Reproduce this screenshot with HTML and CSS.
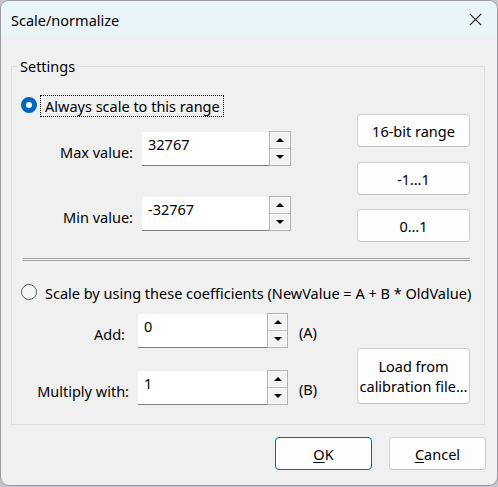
FILE: index.html
```html
<!DOCTYPE html>
<html>
<head>
<meta charset="utf-8">
<title>Scale/normalize</title>
<link rel="stylesheet" href="styles.css">
</head>
<body>
<div class="window">
  <div class="titlebar">
    <span class="title">Scale/normalize</span>
    <svg class="close" width="13" height="13" viewBox="0 0 13 13"><path d="M0.8 0.8L12.2 12.2M12.2 0.8L0.8 12.2" stroke="#1b1b1b" stroke-width="1.15" fill="none"/></svg>
  </div>
  <div class="client">
    <fieldset class="group">
      <legend class="legend">Settings</legend>
      <div class="group-body">
        <div class="section section-a">
          <div class="col-left">
            <div class="radio-row">
              <span class="radio checked"></span>
              <span class="radio-text focus">Always scale to this range</span>
            </div>
            <div class="field-row row-first">
              <span class="lbl lbl-a">Max value:</span>
              <div class="edit edit-a">32767</div>
              <div class="spin">
                <div class="spin-btn"><span class="arrow up"></span></div>
                <div class="spin-btn"><span class="arrow down"></span></div>
              </div>
            </div>
            <div class="field-row row-second">
              <span class="lbl lbl-a">Min value:</span>
              <div class="edit edit-a">-32767</div>
              <div class="spin">
                <div class="spin-btn"><span class="arrow up"></span></div>
                <div class="spin-btn"><span class="arrow down"></span></div>
              </div>
            </div>
          </div>
          <div class="col-right">
            <div class="btn btn-side">16-bit range</div>
            <div class="btn btn-side gap15">-1…1</div>
            <div class="btn btn-side gap14">0…1</div>
          </div>
        </div>
        <div class="separator"></div>
        <div class="radio-row radio-row-2">
          <span class="radio"></span>
          <span class="radio-text plain">Scale by using these coefficients (NewValue = A + B * OldValue)</span>
        </div>
        <div class="section section-b">
          <div class="col-left">
            <div class="field-row row-add">
              <span class="lbl lbl-b lbl-add">Add:</span>
              <div class="edit edit-b">0</div>
              <div class="spin spin-b">
                <div class="spin-btn"><span class="arrow up"></span></div>
                <div class="spin-btn"><span class="arrow down"></span></div>
              </div>
              <span class="suffix">(A)</span>
            </div>
            <div class="field-row row-mul">
              <span class="lbl lbl-b">Multiply with:</span>
              <div class="edit edit-b">1</div>
              <div class="spin spin-b">
                <div class="spin-btn"><span class="arrow up"></span></div>
                <div class="spin-btn"><span class="arrow down"></span></div>
              </div>
              <span class="suffix">(B)</span>
            </div>
          </div>
          <div class="col-right col-bottom">
            <div class="btn btn-side btn-load">Load from<br>calibration file…</div>
          </div>
        </div>
      </div>
    </fieldset>
    <div class="footer">
      <div class="btn btn-dlg btn-default"><u>O</u>K</div>
      <div class="btn btn-dlg"><u>C</u>ancel</div>
    </div>
  </div>
</div>
</body>
</html>
```
FILE: styles.css
```css
html, body {
  margin: 0;
  padding: 0;
}
body {
  background: #c4c6cc;
  width: 498px;
  height: 487px;
  overflow: hidden;
  font-family: "Noto Sans", "Open Sans", sans-serif;
  font-size: 14.5px;
  line-height: 20px;
  color: #000;
}
.window {
  margin: 1px 0 0 1px;
  width: 496px;
  height: 484px;
  background: #f0f0f0;
  border-radius: 8px;
  overflow: hidden;
  box-shadow: 0 0 0 1px rgba(0, 0, 0, 0.22);
  display: flex;
  flex-direction: column;
}
.titlebar {
  height: 36px;
  flex: none;
  background: #eaf5f9;
  display: flex;
  align-items: center;
  justify-content: space-between;
  padding: 1px 15px 0 10px;
  box-sizing: border-box;
}
.title {
  color: #000;
}
.close {
  display: block;
  margin-top: -1px;
}
.client {
  flex: 1;
  padding: 0 12px 0 10px;
  display: flex;
  flex-direction: column;
}
.group {
  margin: 19px 0 0 0;
  padding: 0;
  border: 1px solid #dcdcdc;
  min-width: 0;
}
.legend {
  margin-left: 6px;
  padding: 0 2px;
  line-height: 20px;
}
.group-body {
  padding: 0 14px 19px 9px;
}
.section {
  display: flex;
  justify-content: space-between;
  align-items: flex-start;
}
.section-b {
  align-items: flex-end;
}
.col-left {
  display: flex;
  flex-direction: column;
}
.col-right {
  display: flex;
  flex-direction: column;
  margin-top: 38px;
}
.col-bottom {
  margin-top: 0;
  margin-bottom: 1px;
}
.radio-row {
  display: flex;
  align-items: center;
  height: 22px;
  margin-top: 19px;
}
.radio-row-2 {
  margin-top: 21px;
}
.radio {
  width: 16px;
  height: 16px;
  box-sizing: border-box;
  border-radius: 50%;
  border: 1px solid #5f5f5f;
  background: #f6f6f6;
  flex: none;
  margin-bottom: 2px;
}
.radio.checked {
  border: 5px solid #0067c0;
  background: #ffffff;
}
.radio-text {
  white-space: nowrap;
}
.focus {
  margin-left: 3px;
  height: 22px;
  box-sizing: border-box;
  border: 1px dotted #000;
  padding: 0 3px 0 4px;
}
.plain {
  margin-left: 8px;
}
.field-row {
  display: flex;
  align-items: center;
  height: 34px;
}
.row-first {
  margin-top: 15px;
}
.row-second {
  margin-top: 31px;
}
.row-add {
  margin-top: 10px;
}
.row-mul {
  margin-top: 23px;
}
.lbl {
  text-align: right;
  white-space: nowrap;
  padding-top: 5px;
  box-sizing: border-box;
}
.lbl-a {
  width: 112px;
  margin-right: 9px;
}
.lbl-b {
  width: 108px;
  margin-right: 9px;
}
.lbl-add {
  padding-right: 4px;
}
.edit {
  height: 34px;
  box-sizing: border-box;
  background: #ffffff;
  border-bottom: 1px solid #7d7d7d;
  padding: 2px 6px 0 6px;
}
.edit-a {
  width: 127px;
}
.edit-b {
  width: 129px;
}
.spin {
  width: 22px;
  height: 35px;
  margin-top: -1px;
  box-sizing: border-box;
  border: 1px solid #b0b0b0;
  background: #b8b8b8;
  display: flex;
  flex-direction: column;
  gap: 1px;
}
.spin-b {
  width: 21px;
}
.spin-btn {
  flex: 1;
  background: #f2f2f2;
  border: 1px solid #fdfdfd;
  display: flex;
  align-items: center;
  justify-content: center;
}
.arrow {
  width: 0;
  height: 0;
  border-left: 4px solid transparent;
  border-right: 4px solid transparent;
}
.arrow.up {
  border-bottom: 4px solid #000;
}
.arrow.down {
  border-top: 4px solid #000;
}
.suffix {
  margin-left: 11px;
  padding-top: 2px;
}
.btn {
  box-sizing: border-box;
  background: #fdfdfd;
  border: 1px solid #d0d0d0;
  border-bottom-color: #c2c2c2;
  border-radius: 4px;
  display: flex;
  align-items: center;
  justify-content: center;
  text-align: center;
  white-space: nowrap;
}
.btn-side {
  width: 113px;
  height: 33px;
}
.gap15 {
  margin-top: 15px;
}
.gap14 {
  margin-top: 14px;
}
.btn-load {
  height: 56px;
  line-height: 20px;
}
.separator {
  margin: 16px 0 0 2px;
  width: 447px;
  height: 3px;
  box-sizing: border-box;
  border-top: 1px solid #a0a0a0;
  border-bottom: 1px solid #a0a0a0;
  background: #f4f4f4;
}
.footer {
  display: flex;
  justify-content: flex-end;
  gap: 17px;
  margin-top: 12px;
  margin-right: -1px;
}
.btn-dlg {
  width: 97px;
  height: 33px;
}
.btn-default {
  border: 1px solid #0067c0;
}
u {
  text-decoration-thickness: 1px;
  text-underline-offset: 2px;
}
```
